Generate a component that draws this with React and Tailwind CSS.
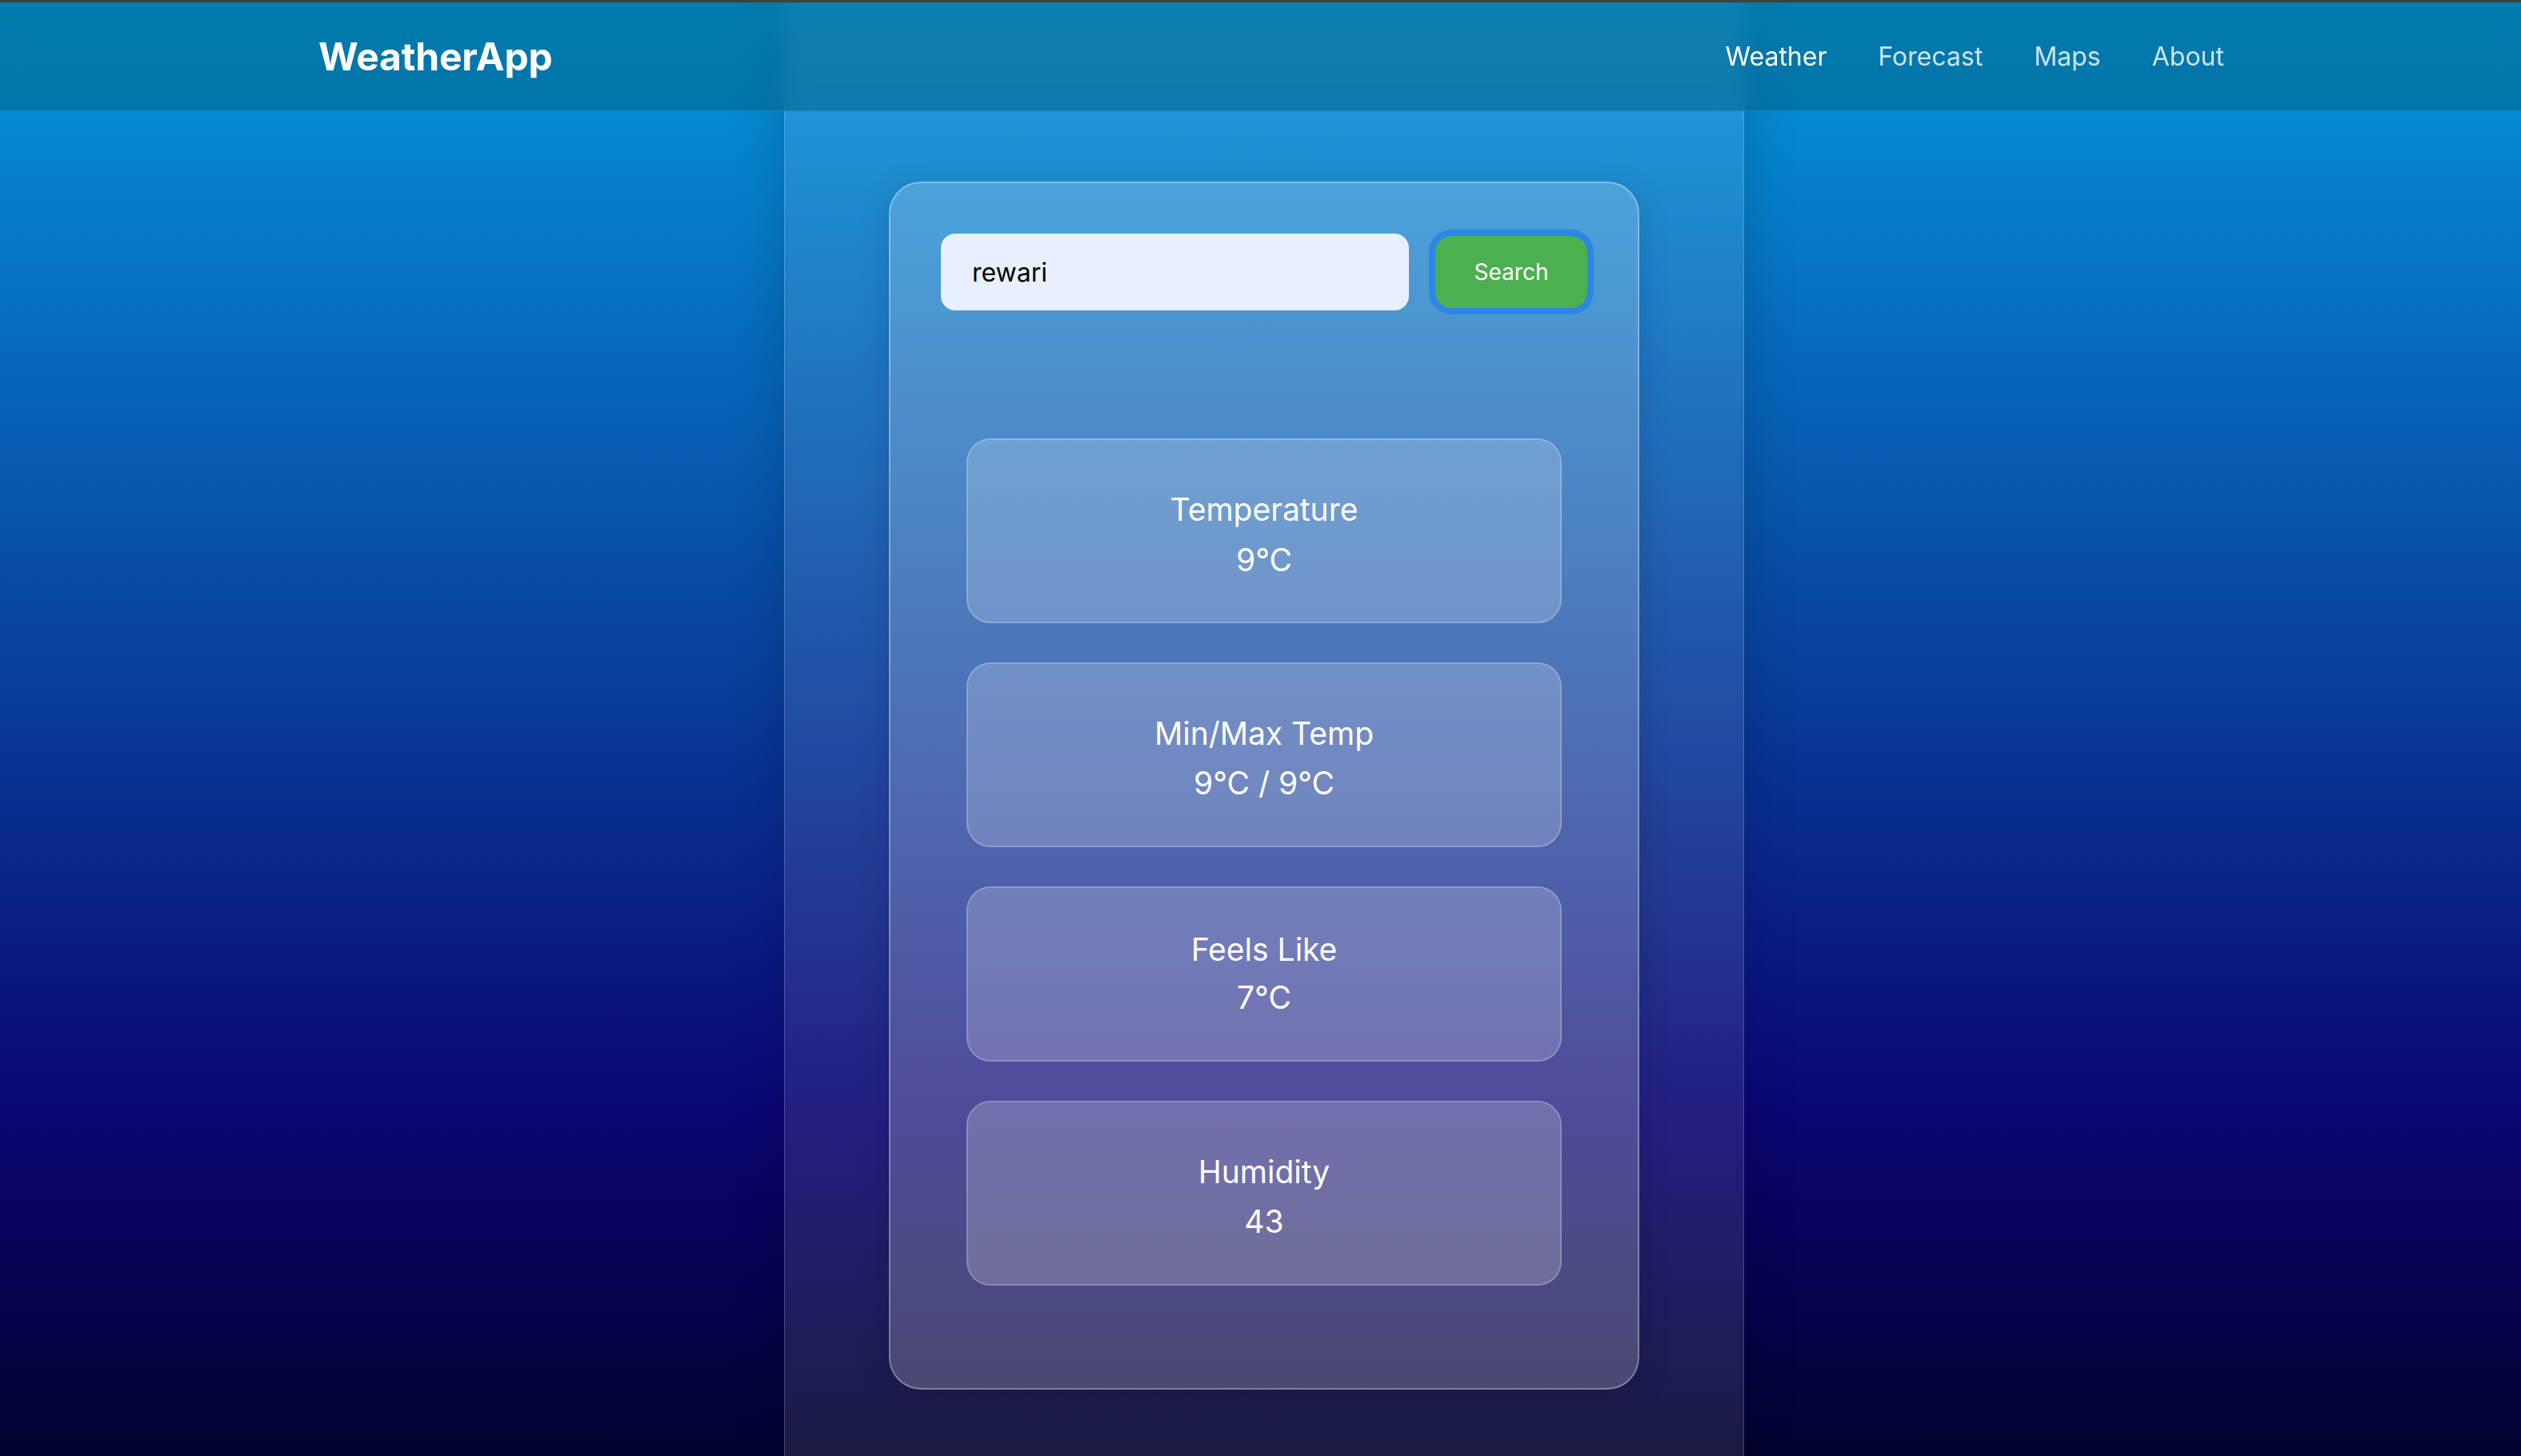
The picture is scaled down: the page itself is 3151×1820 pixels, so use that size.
import React, { useState } from 'react'

const stats = [
    { label: 'Temperature', value: '9°C', box: 'h-[231px] pt-[55px]', lead: 'leading-[63px]' },
    { label: 'Min/Max Temp', value: '9°C / 9°C', box: 'h-[231px] pt-[56px]', lead: 'leading-[62px]' },
    { label: 'Feels Like', value: '7°C', box: 'h-[219px] pt-[47px]', lead: 'leading-[60px]' },
    { label: 'Humidity', value: '43', box: 'h-[231px] pt-[56px]', lead: 'leading-[62px]' },
];

const App = () => {
    const [city, setCity] = useState('rewari');

    return (
        <div className="relative h-[1820px] overflow-hidden bg-[linear-gradient(to_bottom,#0597dc_0%,#0a0674_76%,#02022f_100%)] font-['Inter','Liberation_Sans',sans-serif] text-white">
            {/* navbar sits over the column */}
            <nav className="absolute inset-x-0 top-0 z-10 h-[139px] border-t-[3px] border-b border-t-[#3a4242] border-b-white/10 bg-[#006183]/50 backdrop-blur-md">
                <div className="flex h-full items-center justify-between pl-[398px] pr-[371px]">
                    <h1 className="text-[48px] font-bold leading-none tracking-[-0.2px]">WeatherApp</h1>
                    <ul className="flex items-center gap-16 text-[32px] leading-none">
                        <li className="text-white">Weather</li>
                        <li className="text-white/80">Forecast</li>
                        <li className="text-white/80">Maps</li>
                        <li className="text-white/80">About</li>
                    </ul>
                </div>
            </nav>

            <main className="ml-[980px] h-full w-[1200px] border-x border-white/20 bg-white/10 pt-[227px] shadow-[0_0_60px_rgba(0,0,0,0.18)]">
                <div className="mx-auto w-[938px] rounded-[40px] border-2 border-white/30 bg-white/20 px-[63px] pt-[63px] shadow-[0_8px_40px_rgba(0,0,0,0.15)]">
                    <div className="flex items-center gap-[33px]">
                        <input
                            type="text"
                            value={city}
                            onChange={(e) => setCity(e.target.value)}
                            className="h-[96px] flex-1 rounded-[18px] bg-[#e8f0fe] px-[39px] text-[32px] text-black outline-none"
                        />
                        <button className="h-[90px] w-[190px] rounded-[20px] bg-[#4caf50] text-[28px] text-white shadow-[0_0_0_8px_#2b87e6]">
                            Search
                        </button>
                    </div>

                    <div className="mt-[160px] flex flex-col gap-[49px] px-[32px] pb-[128px]">
                        {stats.map((s) => (
                            <div key={s.label} className={`${s.box} rounded-[30px] border-2 border-white/20 bg-white/20 text-center text-[39px]`}>
                                <p className={s.lead}>{s.label}</p>
                                <p className={s.lead}>{s.value}</p>
                            </div>
                        ))}
                    </div>
                </div>
            </main>
        </div>
    );
}

export default App
